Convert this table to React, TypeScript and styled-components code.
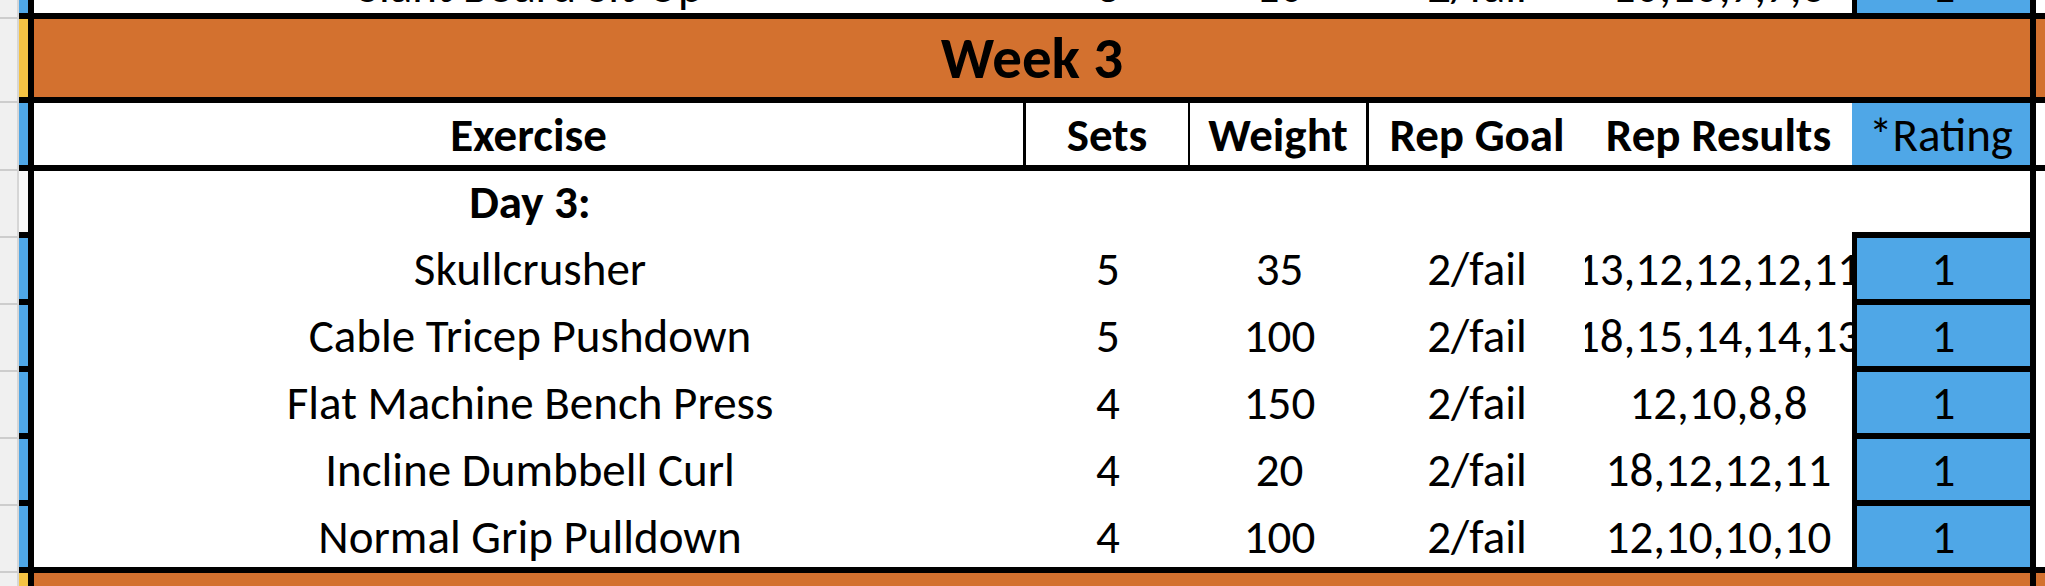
import React from "react";
import styled, { createGlobalStyle } from "styled-components";

const ORANGE = "#d3712f";
const BLUE = "#4fa7e7";
const YELLOW = "#f5c344";
const INK = "#000";

// gutter | marker | edge | Exercise | Sets | Weight | Rep Goal | Rep Results | Rating | edge | tail
const COLUMNS = "19px 9px 6px 992px 164px 179px 216px 267px 178px 6px 9px";

const GlobalStyle = createGlobalStyle`
  html, body {
    margin: 0;
    padding: 0;
    background: #fff;
  }
  body {
    font-family: Calibri, Carlito, Lato, "Liberation Sans", sans-serif;
    color: ${INK};
  }
  * {
    box-sizing: border-box;
  }
`;

type Tone = "blue" | "yellow" | "blank";

const toneColor: Record<Tone, string> = {
  blue: BLUE,
  yellow: YELLOW,
  blank: "#f8f8f8",
};

const Sheet = styled.div`
  width: 2045px;
  height: 586px;
  overflow: hidden;
  background: #fff;
  display: flex;
  flex-direction: column;
`;

const Row = styled.div<{ $h: number; $lead?: boolean }>`
  flex: none;
  display: grid;
  grid-template-columns: ${COLUMNS};
  height: ${(p) => p.$h + 6}px;
  margin-top: ${(p) => (p.$lead ? -48 : 0)}px;
`;

const RowHead = styled.div`
  background: #f0f0f0;
  border-right: 2px solid #d6d6d6;
  border-bottom: 2px solid #cdcdcd;
`;

const Marker = styled.div<{ $tone: Tone }>`
  background: ${(p) => toneColor[p.$tone]};
  border-bottom: 6px solid ${INK};
`;

const Edge = styled.div`
  background: ${INK};
`;

const Tail = styled.div<{ $fill?: string; $rule?: boolean }>`
  background: ${(p) => p.$fill ?? "#fff"};
  border-bottom: 6px solid ${(p) => (p.$rule ? INK : p.$fill ?? "#fff")};
`;

const Cell = styled.div<{
  $rule?: boolean;
  $line?: number;
  $bold?: boolean;
  $fill?: string;
  $box?: boolean;
  $low?: boolean;
}>`
  display: flex;
  align-items: flex-end;
  justify-content: center;
  overflow: hidden;
  white-space: nowrap;
  padding-bottom: ${(p) => (p.$low ? 3 : 6)}px;
  font-size: 47px;
  line-height: 1;
  font-weight: ${(p) => (p.$bold ? 700 : 400)};
  background: ${(p) => p.$fill ?? "#fff"};
  border-bottom: 6px solid ${(p) => (p.$rule ? INK : p.$fill ?? "#fff")};
  border-right: ${(p) => p.$line ?? 0}px solid ${INK};
  border-left: ${(p) => (p.$box ? 5 : 0)}px solid ${INK};
`;

const Band = styled.div`
  grid-column: 4 / 10;
  display: flex;
  align-items: flex-end;
  justify-content: center;
  padding-bottom: 9px;
  background: ${ORANGE};
  border-bottom: 6px solid ${INK};
  font-size: 59px;
  font-weight: 700;
  line-height: 1;
`;

type Exercise = {
  name: string;
  sets: string;
  weight: string;
  goal: string;
  results: string;
  rating: string;
};

const previous: Exercise = {
  name: "Slant Board Sit-Up",
  sets: "3",
  weight: "10",
  goal: "2/fail",
  results: "10,10,7,7,6",
  rating: "1",
};

const exercises: Exercise[] = [
  { name: "Skullcrusher", sets: "5", weight: "35", goal: "2/fail", results: "13,12,12,12,11", rating: "1" },
  { name: "Cable Tricep Pushdown", sets: "5", weight: "100", goal: "2/fail", results: "18,15,14,14,13", rating: "1" },
  { name: "Flat Machine Bench Press", sets: "4", weight: "150", goal: "2/fail", results: "12,10,8,8", rating: "1" },
  { name: "Incline Dumbbell Curl", sets: "4", weight: "20", goal: "2/fail", results: "18,12,12,11", rating: "1" },
  { name: "Normal Grip Pulldown", sets: "4", weight: "100", goal: "2/fail", results: "12,10,10,10", rating: "1" },
];

const ExerciseRow = ({ item, last, lead }: { item: Exercise; last?: boolean; lead?: boolean }) => (
  <Row $h={61} $lead={lead}>
    <RowHead />
    <Marker $tone="blue" />
    <Edge />
    <Cell $rule={last} $low={lead}>{item.name}</Cell>
    <Cell $rule={last} $low={lead}>{item.sets}</Cell>
    <Cell $rule={last} $low={lead}>{item.weight}</Cell>
    <Cell $rule={last} $low={lead}>{item.goal}</Cell>
    <Cell $rule={last} $low={lead}>{item.results}</Cell>
    <Cell $rule $box $low={lead} $fill={BLUE}>
      {item.rating}
    </Cell>
    <Edge />
    <Tail $rule={last} />
  </Row>
);

const WeekBand = ({ title }: { title?: string }) => (
  <Row $h={78}>
    <RowHead />
    <Marker $tone="yellow" />
    <Edge />
    <Band>{title}</Band>
    <Edge />
    <Tail $fill={ORANGE} $rule />
  </Row>
);

const App = () => {
  return (
    <>
      <GlobalStyle />
      <Sheet>
        <ExerciseRow item={previous} last lead />
        <WeekBand title="Week 3" />
        <Row $h={62}>
          <RowHead />
          <Marker $tone="blue" />
          <Edge />
          <Cell $rule $bold $line={3}>
            Exercise
          </Cell>
          <Cell $rule $bold $line={2}>
            Sets
          </Cell>
          <Cell $rule $bold $line={3}>
            Weight
          </Cell>
          <Cell $rule $bold>
            Rep Goal
          </Cell>
          <Cell $rule $bold>
            Rep Results
          </Cell>
          <Cell $rule $fill={BLUE}>
            *Rating
          </Cell>
          <Edge />
          <Tail $rule />
        </Row>
        <Row $h={61}>
          <RowHead />
          <Marker $tone="blank" />
          <Edge />
          <Cell $bold>Day 3:</Cell>
          <Cell />
          <Cell />
          <Cell />
          <Cell />
          <Cell $rule />
          <Edge />
          <Tail />
        </Row>
        {exercises.map((item, index) => (
          <ExerciseRow key={item.name} item={item} last={index === exercises.length - 1} />
        ))}
        <WeekBand />
      </Sheet>
    </>
  );
};

export default App;
